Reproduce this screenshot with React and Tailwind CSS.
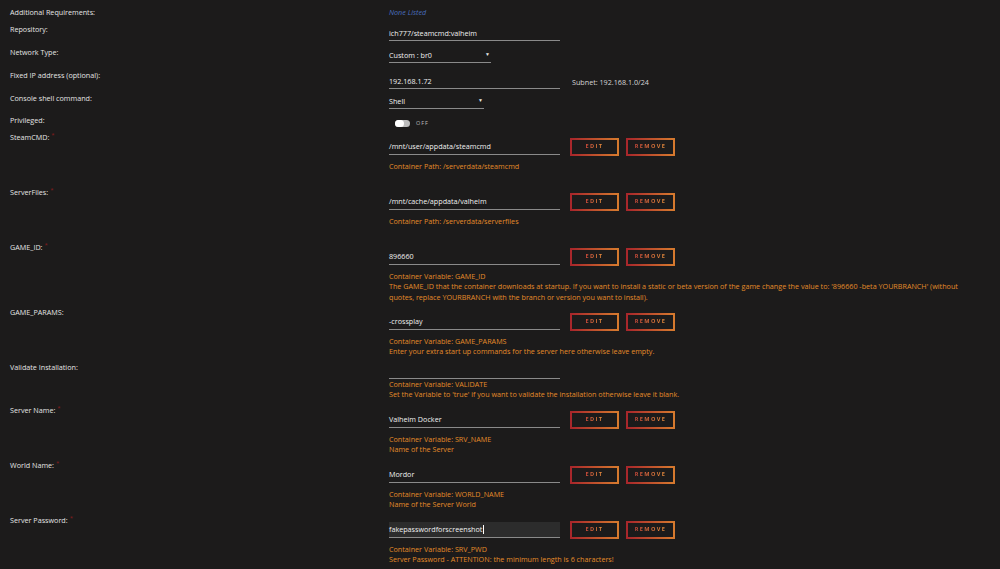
import React from 'react';

const font = { fontFamily: '"Open Sans", "Noto Sans", sans-serif' };

function Label({ text, required }) {
    return (
        <div className="w-[389px] shrink-0 pl-[10px] leading-[11px] text-[7.2px] text-[#e4e4e4]">
            {text}
            {required && <sup className="ml-[2px] text-[6px] text-[#8a1c1c]">*</sup>}
        </div>
    );
}

function GradButton({ children }) {
    return (
        <button className="h-[18px] w-[49px] rounded-[1px] border-2 [border-image:linear-gradient(90deg,#a8262b,#d67a2e)_1] bg-[#1c1b1b] flex items-center justify-center">
            <span className="bg-gradient-to-r from-[#cc4a3a] to-[#e8903c] bg-clip-text text-transparent text-[5.6px] font-bold tracking-[1.4px]">
                {children}
            </span>
        </button>
    );
}

function PathField({ value, dark }) {
    return (
        <div className="flex items-center gap-[10px] h-[18px]">
            <div
                className={`w-[171px] flex items-center border-b border-[#8a8a8a] text-[7.2px] text-[#f0f0f0] ${
                    dark ? 'bg-[#2c2c2c] h-[16px]' : 'h-[17px]'
                }`}
            >
                {value}
                {dark && <span className="ml-[1px] inline-block w-px h-[9px] bg-white" />}
            </div>
            <div className="flex gap-[7px]">
                <GradButton>EDIT</GradButton>
                <GradButton>REMOVE</GradButton>
            </div>
        </div>
    );
}

function Desc({ lines }) {
    return (
        <div className="mt-[5px] text-[7.2px] leading-[10.5px] text-[#e38b2a]">
            {lines.map((l, i) => (
                <div key={i}>{l}</div>
            ))}
        </div>
    );
}

// host paths and container variables with edit/remove actions
const vars = [
    {
        label: 'SteamCMD:',
        value: '/mnt/user/appdata/steamcmd',
        desc: ['Container Path: /serverdata/steamcmd'],
        h: 'h-[55px]',
        required: true,
    },
    {
        label: 'ServerFiles:',
        value: '/mnt/cache/appdata/valheim',
        desc: ['Container Path: /serverdata/serverfiles'],
        h: 'h-[55px]',
        required: true,
    },
    {
        label: 'GAME_ID:',
        value: '896660',
        desc: [
            'Container Variable: GAME_ID',
            "The GAME_ID that the container downloads at startup. If you want to install a static or beta version of the game change the value to: '896660 -beta YOURBRANCH' (without",
            'quotes, replace YOURBRANCH with the branch or version you want to install).',
        ],
        h: 'h-[65px]',
        required: true,
    },
    {
        label: 'GAME_PARAMS:',
        value: '-crossplay',
        desc: [
            'Container Variable: GAME_PARAMS',
            'Enter your extra start up commands for the server here otherwise leave empty.',
        ],
        h: 'h-[55px]',
    },
];

const more = [
    {
        label: 'Server Name:',
        value: 'Valheim Docker',
        desc: ['Container Variable: SRV_NAME', 'Name of the Server'],
        h: 'h-[55px]',
        required: true,
    },
    {
        label: 'World Name:',
        value: 'Mordor',
        desc: ['Container Variable: WORLD_NAME', 'Name of the Server World'],
        h: 'h-[55px]',
        required: true,
    },
    {
        label: 'Server Password:',
        value: 'fakepasswordforscreenshot',
        desc: [
            'Container Variable: SRV_PWD',
            'Server Password - ATTENTION: the minimum length is 6 characters!',
        ],
        h: 'h-[55px]',
        required: true,
        dark: true,
    },
];

function VarRow({ v }) {
    return (
        <div className={`flex ${v.h}`}>
            <Label text={v.label} required={v.required} />
            <div className="pt-[6px]">
                <PathField value={v.value} dark={v.dark} />
                <Desc lines={v.desc} />
            </div>
        </div>
    );
}

function Underlined({ value, w, arrow }) {
    return (
        <div className={`${w} h-[14px] flex items-center justify-between border-b border-[#8a8a8a] text-[7.2px] text-[#f0f0f0]`}>
            <span>{value}</span>
            {arrow && <span className="mr-[1px] text-[5px] text-[#e6e6e6]">▼</span>}
        </div>
    );
}

export default function App() {
    return (
        <div className="min-h-screen w-full bg-[#1c1b1b] pt-[6.5px]" style={font}>
            <div className="flex h-[17px]">
                <Label text="Additional Requirements:" />
                <div className="leading-[11px] text-[7.2px] italic text-[#4a6fbf]">None Listed</div>
            </div>
            <div className="flex h-[23px]">
                <Label text="Repository:" />
                <div className="pt-[3px]">
                    <Underlined value="ich777/steamcmd:valheim" w="w-[171px]" />
                </div>
            </div>
            <div className="flex h-[23px]">
                <Label text="Network Type:" />
                <div className="pt-[2px]">
                    <Underlined value="Custom : br0" w="w-[102px]" arrow />
                </div>
            </div>
            <div className="flex h-[23px]">
                <Label text="Fixed IP address (optional):" />
                <div className="pt-[2px] flex items-center gap-[12px]">
                    <Underlined value="192.168.1.72" w="w-[171px]" />
                    <span className="text-[7.2px] text-[#d6d6d6]">Subnet: 192.168.1.0/24</span>
                </div>
            </div>
            <div className="flex h-[22px]">
                <Label text="Console shell command:" />
                <div className="pt-[2px]">
                    <Underlined value="Shell" w="w-[95px]" arrow />
                </div>
            </div>
            <div className="flex h-[17px]">
                <Label text="Privileged:" />
                <div className="pt-[1px] pl-[6px] flex items-center gap-[6px]">
                    <div className="w-[15px] h-[7px] rounded-full bg-[#bdbdbd] flex">
                        <div className="w-[9px] h-[7px] rounded-full bg-white" />
                    </div>
                    <span className="text-[5.5px] tracking-[1px] text-[#bdbdbd]">OFF</span>
                </div>
            </div>

            {vars.map((v) => (
                <VarRow key={v.label} v={v} />
            ))}

            <div className="flex h-[43px]">
                <Label text="Validate Installation:" />
                <div className="pt-[3px]">
                    <Underlined value="" w="w-[171px]" />
                    <div className="text-[7.2px] leading-[10px] text-[#e38b2a]">
                        <div>Container Variable: VALIDATE</div>
                        <div>Set the Variable to 'true' if you want to validate the installation otherwise leave it blank.</div>
                    </div>
                </div>
            </div>

            {more.map((v) => (
                <VarRow key={v.label} v={v} />
            ))}
        </div>
    );
}
